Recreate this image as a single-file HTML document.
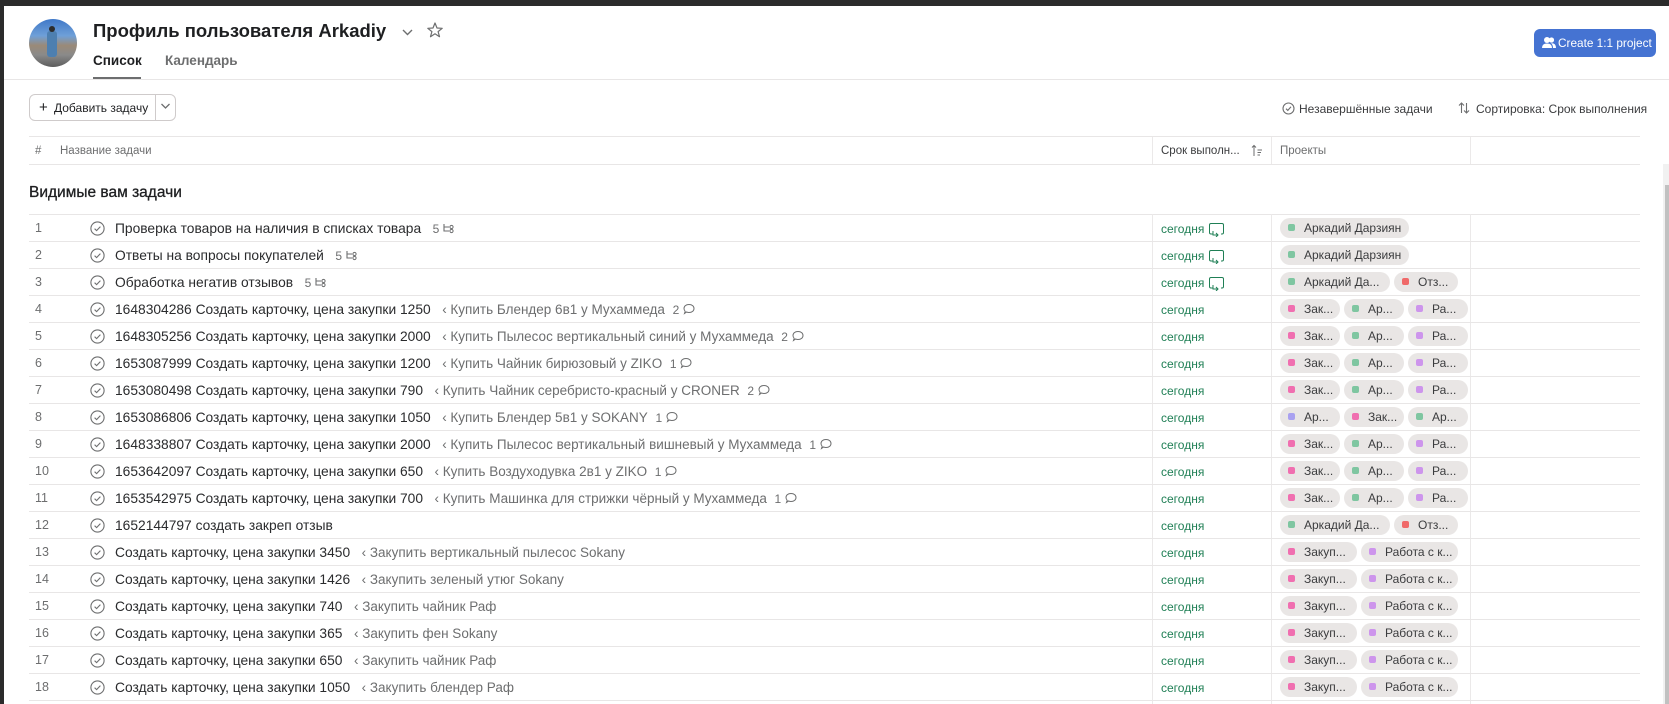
<!DOCTYPE html>
<html><head><meta charset="utf-8">
<style>
*{margin:0;padding:0;box-sizing:border-box}
body{width:1669px;height:704px;overflow:hidden;background:#fff;font-family:"Liberation Sans","Noto Sans CJK SC",sans-serif;color:#1e1f21;position:relative}
.a{position:absolute}
.hl{position:absolute;height:1px;background:#e8e6e6}
.vl{position:absolute;width:1px;background:#ebe9e9}
.r{position:absolute;left:29px;width:1611px;height:27px;border-bottom:1px solid #e8e6e6;font-size:13.8px}
.r .n{position:absolute;left:6px;top:6px;color:#6d6e6f;font-size:12.5px}
.r svg.c{position:absolute;left:61px;top:6px}
.r .t{position:absolute;left:86px;top:6px;white-space:nowrap;color:#2a2b2d}
.r .p{color:#6d6e6f;font-size:13.5px}
.r .m{color:#6d6e6f;font-size:12px}
.r .d{position:absolute;left:1132px;top:7px;color:#1f7f55;font-size:12px}
.r .pl{position:absolute;left:1251px;top:3px;display:flex;gap:4px}
.pill{height:20px;border-radius:10px;background:#e9e6e5;font-size:12px;color:#3b3c3e;padding-left:14px;position:relative;line-height:20px;white-space:nowrap;overflow:hidden}
.pill i{position:absolute;left:8px;top:6px;width:7px;height:7px;border-radius:2px}
.pill span{padding-left:10px}
.g{background:#7fc6a1}.pk{background:#f06fb0}.pu{background:#cd95ec}.rd{background:#f06a6a}.bl{background:#a9a1f0}
</style></head><body>
<div class="a" style="left:0;top:0;width:1669px;height:6px;background:#2b2b2b"></div>
<div class="a" style="left:0;top:6px;width:4px;height:698px;background:#2b2b2b"></div>

<div class="a" style="left:29px;top:19px;width:48px;height:48px;border-radius:50%;background:linear-gradient(180deg,#3f78c8 0%,#6fa0d8 35%,#9a8a78 55%,#8a8a8a 75%,#5c5c5c 100%);overflow:hidden">
<div class="a" style="left:18px;top:12px;width:10px;height:26px;background:#4d7fb0;border-radius:3px"></div>
<div class="a" style="left:20px;top:7px;width:6px;height:6px;background:#2c2c2c;border-radius:50%"></div>
</div>
<div class="a" style="left:93px;top:20px;font-size:18.5px;font-weight:bold;color:#1e1f21;white-space:nowrap">Профиль пользователя Arkadiy</div>
<svg class="a" style="left:401px;top:28px" width="13" height="9" viewBox="0 0 13 9"><path d="M2 2 L6.5 6.5 L11 2" fill="none" stroke="#6d6e6f" stroke-width="1.4"/></svg>
<svg class="a" style="left:426px;top:21px" width="18" height="18" viewBox="0 0 18 18"><path d="M9 2 L11 7 L16.2 7.3 L12.1 10.6 L13.5 15.7 L9 12.8 L4.5 15.7 L5.9 10.6 L1.8 7.3 L7 7 Z" fill="none" stroke="#6d6e6f" stroke-width="1.2" stroke-linejoin="round"/></svg>
<div class="a" style="left:93px;top:53px;font-size:13.5px;font-weight:bold;color:#1e1f21">Список</div>
<div class="a" style="left:165px;top:53px;font-size:13.5px;font-weight:bold;color:#6d6e6f">Календарь</div>
<div class="a" style="left:93px;top:77px;width:48px;height:2px;background:#6d6e6f"></div>
<div class="hl" style="left:4px;top:79px;width:1665px"></div>

<div class="a" style="left:1534px;top:29px;width:122px;height:28px;border-radius:6px;background:#4573d2;color:#fff;font-size:11.8px;line-height:28px;padding-left:24px;white-space:nowrap">Create 1:1 project</div>
<svg class="a" style="left:1542px;top:36px" width="14" height="13" viewBox="0 0 14 13"><circle cx="5" cy="4" r="3" fill="#fff"/><circle cx="9.5" cy="4" r="2.6" fill="#fff"/><path d="M0 12 Q0 7.5 5 7.5 Q10 7.5 10 12Z M9 7.3 Q14 7 14 12 H11 Q11 9 9 7.3Z" fill="#fff"/></svg>

<div class="a" style="left:29px;top:94px;width:147px;height:27px;border:1px solid #cfcbcb;border-radius:6px"></div>
<div class="vl" style="left:155px;top:95px;height:25px;background:#cfcbcb"></div>
<div class="a" style="left:39px;top:99px;font-size:15px;color:#1e1f21">+</div>
<div class="a" style="left:54px;top:101px;font-size:12px;color:#1e1f21">Добавить задачу</div>
<svg class="a" style="left:160px;top:102px" width="11" height="8" viewBox="0 0 11 8"><path d="M1.5 2 L5.5 6 L9.5 2" fill="none" stroke="#6d6e6f" stroke-width="1.3"/></svg>

<svg class="a" style="left:1282px;top:102px" width="13" height="13" viewBox="0 0 13 13"><circle cx="6.5" cy="6.5" r="5.5" fill="none" stroke="#6d6e6f" stroke-width="1.1"/><path d="M4 6.7 L5.8 8.4 L9 4.8" fill="none" stroke="#6d6e6f" stroke-width="1.1"/></svg>
<div class="a" style="left:1299px;top:102px;font-size:12px;color:#3b3c3e;white-space:nowrap">Незавершённые задачи</div>
<svg class="a" style="left:1458px;top:101px" width="12" height="14" viewBox="0 0 12 14"><path d="M3.5 12 V2 M1 4.5 L3.5 2 L6 4.5 M8.5 2 V12 M6 9.5 L8.5 12 L11 9.5" fill="none" stroke="#6d6e6f" stroke-width="1.1"/></svg>
<div class="a" style="left:1476px;top:102px;font-size:12px;color:#3b3c3e;white-space:nowrap">Сортировка: Срок выполнения</div>

<div class="hl" style="left:29px;top:136px;width:1611px"></div>
<div class="hl" style="left:29px;top:164px;width:1611px"></div>
<div class="a" style="left:35px;top:145px;font-size:11.5px;color:#6d6e6f">#</div>
<div class="a" style="left:60px;top:145px;font-size:11.5px;color:#6d6e6f">Название задачи</div>
<div class="a" style="left:1161px;top:145px;font-size:11.5px;color:#3b3c3e">Срок выполн...</div>
<svg class="a" style="left:1251px;top:144px" width="12" height="13" viewBox="0 0 12 13"><path d="M3 12 V1.5 M1 3.5 L3 1.5 L5 3.5 M6.5 6 H11 M6.5 8.5 H10 M6.5 11 H9" fill="none" stroke="#6d6e6f" stroke-width="1"/></svg>
<div class="a" style="left:1280px;top:145px;font-size:11.5px;color:#6d6e6f">Проекты</div>
<div class="vl" style="left:1152px;top:137px;height:27px"></div>
<div class="vl" style="left:1271px;top:137px;height:27px"></div>
<div class="vl" style="left:1470px;top:137px;height:27px"></div>

<div class="a" style="left:29px;top:184px;font-size:15.5px;color:#1e1f21;-webkit-text-stroke:0.3px #1e1f21">Видимые вам задачи</div>
<div class="hl" style="left:29px;top:214px;width:1611px"></div>

<div class="vl" style="left:1152px;top:214px;height:490px"></div>
<div class="vl" style="left:1271px;top:214px;height:490px"></div>
<div class="vl" style="left:1470px;top:214px;height:490px"></div>

<div class="a" style="left:1663px;top:164px;width:6px;height:540px;background:#f1f1f1"></div>
<div class="a" style="left:1665px;top:185px;width:4px;height:519px;background:#c1c1c1"></div>

<svg width="0" height="0" style="position:absolute"><defs>
<symbol id="ck" viewBox="0 0 15 15"><circle cx="7.5" cy="7.5" r="6.6" fill="none" stroke="#6d6e6f" stroke-width="1.1"/><path d="M4.6 7.7 L6.6 9.6 L10.4 5.6" fill="none" stroke="#6d6e6f" stroke-width="1.1"/></symbol>
<symbol id="sb" viewBox="0 0 13 11"><path d="M1 1 V8 H6 M1 4 H6" fill="none" stroke="#6d6e6f" stroke-width="1.1"/><circle cx="8.5" cy="4" r="1.6" fill="none" stroke="#6d6e6f" stroke-width="1"/><circle cx="8.5" cy="8" r="1.6" fill="none" stroke="#6d6e6f" stroke-width="1"/></symbol>
<symbol id="cm" viewBox="0 0 12 12"><path d="M6 1.5 C9 1.5 11 3.2 11 5.5 C11 7.8 9 9.5 6 9.5 C5 9.5 4.3 9.3 3.6 9 L1.5 10.5 L2.2 8.3 C1.4 7.5 1 6.5 1 5.5 C1 3.2 3 1.5 6 1.5Z" fill="none" stroke="#6d6e6f" stroke-width="1"/></symbol>
<symbol id="rc" viewBox="0 0 17 15"><path d="M5 12 H3 Q1.5 12 1.5 10.5 V3 Q1.5 1.5 3 1.5 H14 Q15.5 1.5 15.5 3 V10.5 Q15.5 12 14 12 H13 M5 9 V13 H10 M8 11 L10 13 L8 15" fill="none" stroke="#1f7f55" stroke-width="1"/></symbol>
</defs></svg>

<div class="r" style="top:215px"><span class="n">1</span><svg class="c" width="15" height="15"><use href="#ck"/></svg><span class="t">Проверка товаров на наличия в списках товара&nbsp;&nbsp;&nbsp;<span class="m">5</span> <svg width="13" height="11" style="vertical-align:-1px"><use href="#sb"/></svg></span><span class="d">сегодня <svg width="17" height="15" style="vertical-align:-4px"><use href="#rc"/></svg></span><div class="pl"><div class="pill" style="width:129px"><i class="g"></i><span>Аркадий Дарзиян</span></div></div></div>
<div class="r" style="top:242px"><span class="n">2</span><svg class="c" width="15" height="15"><use href="#ck"/></svg><span class="t">Ответы на вопросы покупателей&nbsp;&nbsp;&nbsp;<span class="m">5</span> <svg width="13" height="11" style="vertical-align:-1px"><use href="#sb"/></svg></span><span class="d">сегодня <svg width="17" height="15" style="vertical-align:-4px"><use href="#rc"/></svg></span><div class="pl"><div class="pill" style="width:129px"><i class="g"></i><span>Аркадий Дарзиян</span></div></div></div>
<div class="r" style="top:269px"><span class="n">3</span><svg class="c" width="15" height="15"><use href="#ck"/></svg><span class="t">Обработка негатив отзывов&nbsp;&nbsp;&nbsp;<span class="m">5</span> <svg width="13" height="11" style="vertical-align:-1px"><use href="#sb"/></svg></span><span class="d">сегодня <svg width="17" height="15" style="vertical-align:-4px"><use href="#rc"/></svg></span><div class="pl"><div class="pill" style="width:110px"><i class="g"></i><span>Аркадий Да...</span></div><div class="pill" style="width:64px"><i class="rd"></i><span>Отз...</span></div></div></div>

<div class="r" style="top:296px"><span class="n">4</span><svg class="c" width="15" height="15"><use href="#ck"/></svg><span class="t">1648304286 Создать карточку, цена закупки 1250&nbsp;&nbsp; <span class="p">‹ Купить Блендер 6в1 у Мухаммеда</span>&nbsp; <span class="m">2</span> <svg width="12" height="12" style="vertical-align:-1px"><use href="#cm"/></svg></span><span class="d">сегодня</span><div class="pl"><div class="pill" style="width:60px"><i class="pk"></i><span>Зак...</span></div><div class="pill" style="width:60px"><i class="g"></i><span>Ар...</span></div><div class="pill" style="width:60px"><i class="pu"></i><span>Ра...</span></div></div></div>
<div class="r" style="top:323px"><span class="n">5</span><svg class="c" width="15" height="15"><use href="#ck"/></svg><span class="t">1648305256 Создать карточку, цена закупки 2000&nbsp;&nbsp; <span class="p">‹ Купить Пылесос вертикальный синий у Мухаммеда</span>&nbsp; <span class="m">2</span> <svg width="12" height="12" style="vertical-align:-1px"><use href="#cm"/></svg></span><span class="d">сегодня</span><div class="pl"><div class="pill" style="width:60px"><i class="pk"></i><span>Зак...</span></div><div class="pill" style="width:60px"><i class="g"></i><span>Ар...</span></div><div class="pill" style="width:60px"><i class="pu"></i><span>Ра...</span></div></div></div>
<div class="r" style="top:350px"><span class="n">6</span><svg class="c" width="15" height="15"><use href="#ck"/></svg><span class="t">1653087999 Создать карточку, цена закупки 1200&nbsp;&nbsp; <span class="p">‹ Купить Чайник бирюзовый у ZIKO</span>&nbsp; <span class="m">1</span> <svg width="12" height="12" style="vertical-align:-1px"><use href="#cm"/></svg></span><span class="d">сегодня</span><div class="pl"><div class="pill" style="width:60px"><i class="pk"></i><span>Зак...</span></div><div class="pill" style="width:60px"><i class="g"></i><span>Ар...</span></div><div class="pill" style="width:60px"><i class="pu"></i><span>Ра...</span></div></div></div>
<div class="r" style="top:377px"><span class="n">7</span><svg class="c" width="15" height="15"><use href="#ck"/></svg><span class="t">1653080498 Создать карточку, цена закупки 790&nbsp;&nbsp; <span class="p">‹ Купить Чайник серебристо-красный у CRONER</span>&nbsp; <span class="m">2</span> <svg width="12" height="12" style="vertical-align:-1px"><use href="#cm"/></svg></span><span class="d">сегодня</span><div class="pl"><div class="pill" style="width:60px"><i class="pk"></i><span>Зак...</span></div><div class="pill" style="width:60px"><i class="g"></i><span>Ар...</span></div><div class="pill" style="width:60px"><i class="pu"></i><span>Ра...</span></div></div></div>
<div class="r" style="top:404px"><span class="n">8</span><svg class="c" width="15" height="15"><use href="#ck"/></svg><span class="t">1653086806 Создать карточку, цена закупки 1050&nbsp;&nbsp; <span class="p">‹ Купить Блендер 5в1 у SOKANY</span>&nbsp; <span class="m">1</span> <svg width="12" height="12" style="vertical-align:-1px"><use href="#cm"/></svg></span><span class="d">сегодня</span><div class="pl"><div class="pill" style="width:60px"><i class="bl"></i><span>Ар...</span></div><div class="pill" style="width:60px"><i class="pk"></i><span>Зак...</span></div><div class="pill" style="width:60px"><i class="g"></i><span>Ар...</span></div></div></div>
<div class="r" style="top:431px"><span class="n">9</span><svg class="c" width="15" height="15"><use href="#ck"/></svg><span class="t">1648338807 Создать карточку, цена закупки 2000&nbsp;&nbsp; <span class="p">‹ Купить Пылесос вертикальный вишневый у Мухаммеда</span>&nbsp; <span class="m">1</span> <svg width="12" height="12" style="vertical-align:-1px"><use href="#cm"/></svg></span><span class="d">сегодня</span><div class="pl"><div class="pill" style="width:60px"><i class="pk"></i><span>Зак...</span></div><div class="pill" style="width:60px"><i class="g"></i><span>Ар...</span></div><div class="pill" style="width:60px"><i class="pu"></i><span>Ра...</span></div></div></div>
<div class="r" style="top:458px"><span class="n">10</span><svg class="c" width="15" height="15"><use href="#ck"/></svg><span class="t">1653642097 Создать карточку, цена закупки 650&nbsp;&nbsp; <span class="p">‹ Купить Воздуходувка 2в1 у ZIKO</span>&nbsp; <span class="m">1</span> <svg width="12" height="12" style="vertical-align:-1px"><use href="#cm"/></svg></span><span class="d">сегодня</span><div class="pl"><div class="pill" style="width:60px"><i class="pk"></i><span>Зак...</span></div><div class="pill" style="width:60px"><i class="g"></i><span>Ар...</span></div><div class="pill" style="width:60px"><i class="pu"></i><span>Ра...</span></div></div></div>
<div class="r" style="top:485px"><span class="n">11</span><svg class="c" width="15" height="15"><use href="#ck"/></svg><span class="t">1653542975 Создать карточку, цена закупки 700&nbsp;&nbsp; <span class="p">‹ Купить Машинка для стрижки чёрный у Мухаммеда</span>&nbsp; <span class="m">1</span> <svg width="12" height="12" style="vertical-align:-1px"><use href="#cm"/></svg></span><span class="d">сегодня</span><div class="pl"><div class="pill" style="width:60px"><i class="pk"></i><span>Зак...</span></div><div class="pill" style="width:60px"><i class="g"></i><span>Ар...</span></div><div class="pill" style="width:60px"><i class="pu"></i><span>Ра...</span></div></div></div>
<div class="r" style="top:512px"><span class="n">12</span><svg class="c" width="15" height="15"><use href="#ck"/></svg><span class="t">1652144797 создать закреп отзыв</span><span class="d">сегодня</span><div class="pl"><div class="pill" style="width:110px"><i class="g"></i><span>Аркадий Да...</span></div><div class="pill" style="width:64px"><i class="rd"></i><span>Отз...</span></div></div></div>

<div class="r" style="top:539px"><span class="n">13</span><svg class="c" width="15" height="15"><use href="#ck"/></svg><span class="t">Создать карточку, цена закупки 3450&nbsp;&nbsp; <span class="p">‹ Закупить вертикальный пылесос Sokany</span></span><span class="d">сегодня</span><div class="pl"><div class="pill" style="width:77px"><i class="pk"></i><span>Закуп...</span></div><div class="pill" style="width:97px"><i class="pu"></i><span>Работа с к...</span></div></div></div>
<div class="r" style="top:566px"><span class="n">14</span><svg class="c" width="15" height="15"><use href="#ck"/></svg><span class="t">Создать карточку, цена закупки 1426&nbsp;&nbsp; <span class="p">‹ Закупить зеленый утюг Sokany</span></span><span class="d">сегодня</span><div class="pl"><div class="pill" style="width:77px"><i class="pk"></i><span>Закуп...</span></div><div class="pill" style="width:97px"><i class="pu"></i><span>Работа с к...</span></div></div></div>
<div class="r" style="top:593px"><span class="n">15</span><svg class="c" width="15" height="15"><use href="#ck"/></svg><span class="t">Создать карточку, цена закупки 740&nbsp;&nbsp; <span class="p">‹ Закупить чайник Раф</span></span><span class="d">сегодня</span><div class="pl"><div class="pill" style="width:77px"><i class="pk"></i><span>Закуп...</span></div><div class="pill" style="width:97px"><i class="pu"></i><span>Работа с к...</span></div></div></div>
<div class="r" style="top:620px"><span class="n">16</span><svg class="c" width="15" height="15"><use href="#ck"/></svg><span class="t">Создать карточку, цена закупки 365&nbsp;&nbsp; <span class="p">‹ Закупить фен Sokany</span></span><span class="d">сегодня</span><div class="pl"><div class="pill" style="width:77px"><i class="pk"></i><span>Закуп...</span></div><div class="pill" style="width:97px"><i class="pu"></i><span>Работа с к...</span></div></div></div>
<div class="r" style="top:647px"><span class="n">17</span><svg class="c" width="15" height="15"><use href="#ck"/></svg><span class="t">Создать карточку, цена закупки 650&nbsp;&nbsp; <span class="p">‹ Закупить чайник Раф</span></span><span class="d">сегодня</span><div class="pl"><div class="pill" style="width:77px"><i class="pk"></i><span>Закуп...</span></div><div class="pill" style="width:97px"><i class="pu"></i><span>Работа с к...</span></div></div></div>
<div class="r" style="top:674px"><span class="n">18</span><svg class="c" width="15" height="15"><use href="#ck"/></svg><span class="t">Создать карточку, цена закупки 1050&nbsp;&nbsp; <span class="p">‹ Закупить блендер Раф</span></span><span class="d">сегодня</span><div class="pl"><div class="pill" style="width:77px"><i class="pk"></i><span>Закуп...</span></div><div class="pill" style="width:97px"><i class="pu"></i><span>Работа с к...</span></div></div></div>
</body></html>
